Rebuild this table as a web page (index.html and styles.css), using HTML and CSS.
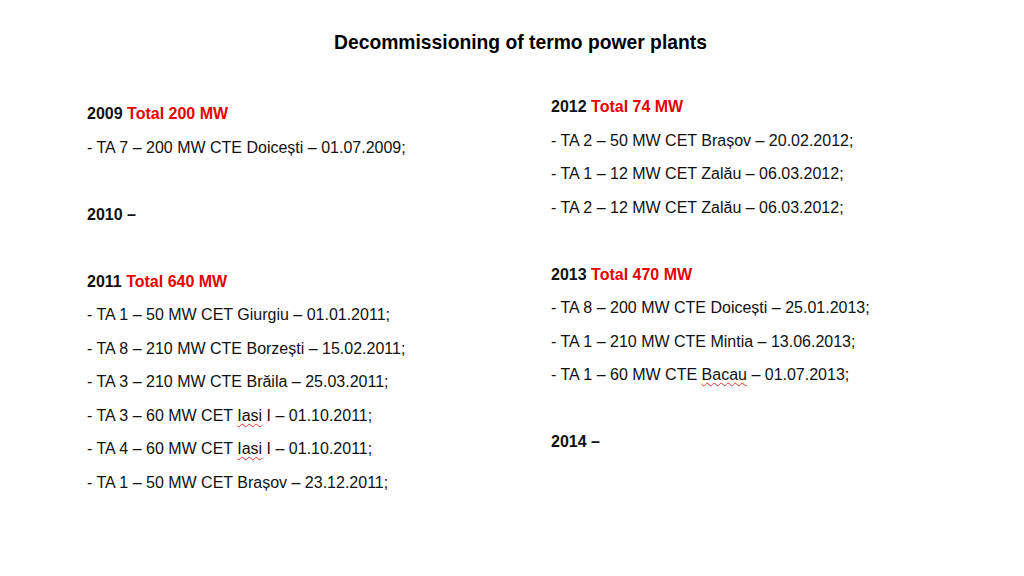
FILE: index.html
```html
<!DOCTYPE html>
<html>
<head>
<meta charset="utf-8">
<link rel="stylesheet" href="styles.css">
</head>
<body>
<div class="slide">
  <h1 class="title">Decommissioning of termo power plants</h1>
  <div class="columns">
    <div class="col col-left">
      <p class="year">2009 <span class="total">Total 200 MW</span></p>
      <p class="item">- TA 7 – 200 MW CTE Doicești – 01.07.2009;</p>
      <p class="blank">&nbsp;</p>
      <p class="year">2010 –</p>
      <p class="blank">&nbsp;</p>
      <p class="year">2011 <span class="total">Total 640 MW</span></p>
      <p class="item">- TA 1 – 50 MW CET Giurgiu – 01.01.2011;</p>
      <p class="item">- TA 8 – 210 MW CTE Borzești – 15.02.2011;</p>
      <p class="item">- TA 3 – 210 MW CTE Brăila – 25.03.2011;</p>
      <p class="item">- TA 3 – 60 MW CET <span class="spell">Iasi</span> I – 01.10.2011;</p>
      <p class="item">- TA 4 – 60 MW CET <span class="spell">Iasi</span> I – 01.10.2011;</p>
      <p class="item">- TA 1 – 50 MW CET Brașov – 23.12.2011;</p>
    </div>
    <div class="col col-right">
      <p class="year">2012 <span class="total">Total 74 MW</span></p>
      <p class="item">- TA 2 – 50 MW CET Brașov – 20.02.2012;</p>
      <p class="item">- TA 1 – 12 MW CET Zalău – 06.03.2012;</p>
      <p class="item">- TA 2 – 12 MW CET Zalău – 06.03.2012;</p>
      <p class="blank">&nbsp;</p>
      <p class="year">2013 <span class="total">Total 470 MW</span></p>
      <p class="item">- TA 8 – 200 MW CTE Doicești – 25.01.2013;</p>
      <p class="item">- TA 1 – 210 MW CTE Mintia – 13.06.2013;</p>
      <p class="item">- TA 1 – 60 MW CTE <span class="spell">Bacau</span> – 01.07.2013;</p>
      <p class="blank">&nbsp;</p>
      <p class="year">2014 –</p>
    </div>
  </div>
</div>
</body>
</html>
```
FILE: styles.css
```css
html, body {
  margin: 0;
  padding: 0;
  background: #ffffff;
}
.slide {
  width: 1024px;
  height: 576px;
  font-family: "Liberation Sans", Arial, sans-serif;
  color: #111111;
  overflow: hidden;
}
.title {
  margin: 0;
  padding-top: 32px;
  padding-left: 17px;
  text-align: center;
  font-size: 19.3px;
  font-weight: bold;
  line-height: 22px;
  color: #000000;
}
.columns {
  display: grid;
  grid-template-columns: 464px 1fr;
  padding-left: 87px;
  margin-top: -1px;
}
.col p {
  margin: 0;
  font-size: 16px;
  line-height: 33.5px;
  white-space: nowrap;
}
.col-left {
  padding-top: 44px;
}
.col-right {
  padding-top: 37px;
}
.year {
  font-weight: bold;
}
.total {
  color: #e60000;
}
.spell {
  text-decoration: underline wavy #e03030;
  text-decoration-thickness: 1px;
  text-underline-offset: 2px;
}
```
